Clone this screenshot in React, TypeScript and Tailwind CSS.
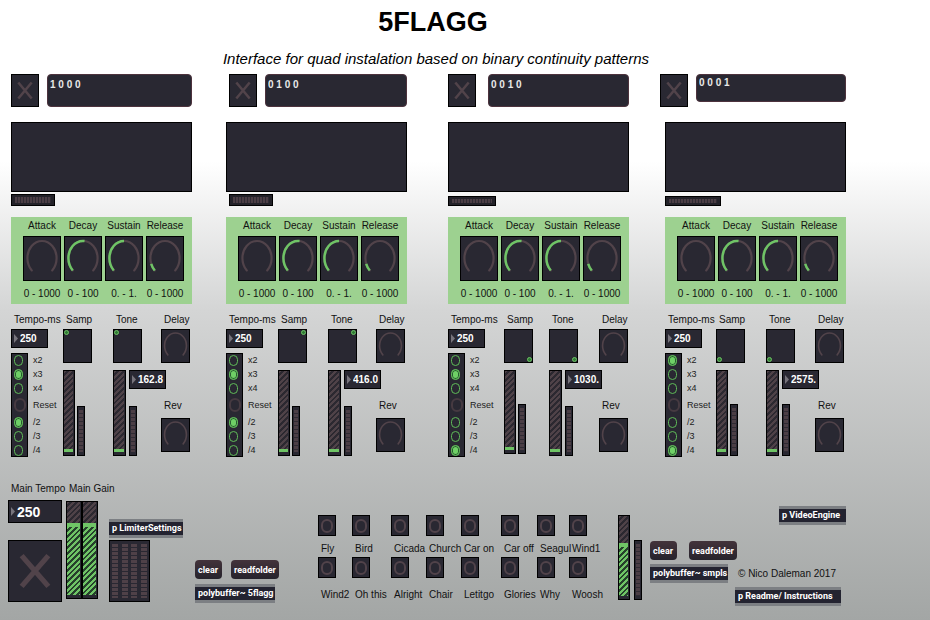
import React from "react";

type Channel = {
  id: string;
  pattern: string;
  cell: string;
  head: string;
  field: string;
  strip: string;
  columns: string;
  knob: string;
  faderHeight: string;
  meterHeight: string;
  active: string[];
  frequency: string;
};

const channels: Channel[] = [
  {
    id: "ch1",
    pattern: "1 0 0 0",
    cell: "pr-[34px]",
    head: "gap-2",
    field: "h-[33px]",
    strip: "h-3 w-11",
    columns: "grid-cols-[52px_50px_48px_29px]",
    knob: "top-0 left-0",
    faderHeight: "h-[86px]",
    meterHeight: "h-[50px]",
    active: ["x3", "/2"],
    frequency: "162.8",
  },
  {
    id: "ch2",
    pattern: "0 1 0 0",
    cell: "pr-[41px]",
    head: "ml-[3px] gap-2",
    field: "h-[33px]",
    strip: "ml-[3px] h-3 w-11",
    columns: "grid-cols-[52px_50px_48px_29px]",
    knob: "top-0 right-0",
    faderHeight: "h-[86px]",
    meterHeight: "h-[50px]",
    active: ["x3", "/2"],
    frequency: "416.0",
  },
  {
    id: "ch3",
    pattern: "0 0 1 0",
    cell: "pr-[36px]",
    head: "gap-3",
    field: "h-[33px]",
    strip: "mt-0.5 h-2.5 w-12",
    columns: "grid-cols-[56px_45px_50px_29px]",
    knob: "right-0 bottom-0",
    faderHeight: "h-[84px]",
    meterHeight: "h-[50px]",
    active: ["x3", "/4"],
    frequency: "1030.",
  },
  {
    id: "ch4",
    pattern: "0 0 0 1",
    cell: "pr-[84px]",
    head: "-ml-[5px] gap-2",
    field: "h-7",
    strip: "mt-0.5 h-2.5 w-14",
    columns: "grid-cols-[51px_50px_49px_29px]",
    knob: "bottom-0 left-0",
    faderHeight: "h-[86px]",
    meterHeight: "h-[52px]",
    active: ["x2", "/4"],
    frequency: "2575.",
  },
];

const envelope = [
  { name: "Attack", range: "0 - 1000", value: 0 },
  { name: "Decay", range: "0 - 100", value: 52 },
  { name: "Sustain", range: "0. - 1.", value: 50 },
  { name: "Release", range: "0 - 1000", value: 10 },
];

const divisions = ["x2", "x3", "x4", "Reset", "/2", "/3", "/4"];

const sounds = [
  ["Fly", "Bird", "Cicada", "Church", "Car on", "Car off", "Seagul", "Wind1"],
  ["Wind2", "Oh this", "Alright", "Chair", "Letitgo", "Glories", "Why", "Woosh"],
];

function Toggle({ label, size }: { label: string; size: string }) {
  return (
    <label className={`relative block shrink-0 border border-black bg-[#292832] ${size}`}>
      <input type="checkbox" aria-label={label} className="absolute inset-0 opacity-0" />
      <svg viewBox="0 0 28 33" preserveAspectRatio="none" className="block h-full w-full">
        <path d="M6.8 8 21.2 25M21.2 8 6.8 25" stroke="#51434a" strokeWidth="2.8" />
      </svg>
    </label>
  );
}

function Dial({ label, value = 0, size }: { label: string; value?: number; size: string }) {
  const arc = "M8.2 35A15.4 18 0 1 1 29.8 35";
  return (
    <div className={`relative border border-black bg-[#292832] ${size}`}>
      <svg viewBox="0 0 38 45" preserveAspectRatio="none" className="block h-full w-full" fill="none">
        <path d={arc} stroke="#51434a" strokeWidth="2.3" strokeLinecap="round" />
        {value > 0 && (
          <path d={arc} pathLength={100} strokeDasharray={`${value} 200`} stroke="#6fc466" strokeWidth="2.6" />
        )}
      </svg>
      <input type="range" aria-label={label} defaultValue={value} className="absolute inset-0 h-full w-full opacity-0" />
    </div>
  );
}

function NumberBox({ label, value, large = false }: { label: string; value: string; large?: boolean }) {
  return (
    <label
      className={`flex shrink-0 items-center border border-black bg-[#292832] pl-0.5 ${
        large ? "h-[23px] w-[54px]" : "h-[19px] w-[37px]"
      }`}
    >
      <svg viewBox="0 0 4 9" className="h-[9px] w-1 shrink-0">
        <path d="M0 0 4 4.5 0 9z" fill="#77747c" />
      </svg>
      <input
        aria-label={label}
        defaultValue={value}
        className={`w-full min-w-0 bg-transparent pl-0.5 font-bold text-white outline-none ${
          large ? "text-[14px] leading-5" : "text-[10px] leading-4"
        }`}
      />
    </label>
  );
}

function Fader({ label, level, size, full = false }: { label: string; level: number; size: string; full?: boolean }) {
  return (
    <div className={`relative flex shrink-0 flex-col justify-end border border-black bg-[#292832] pr-px pb-[3px] ${size}`}>
      <div className="flex-1 bg-[repeating-linear-gradient(135deg,#4f4248_0px,#4f4248_2px,#2b2830_2px,#2b2830_4px)]" />
      <div
        className={
          full
            ? "border-t-4 border-[#6fc466] bg-[repeating-linear-gradient(135deg,#6fc466_0px,#6fc466_2px,#26402c_2px,#26402c_4px)]"
            : "bg-[#6fc466]"
        }
        style={{ height: `${level}%` }}
      />
      <input type="range" aria-label={label} defaultValue={level} className="absolute inset-0 h-full w-full opacity-0" />
    </div>
  );
}

function Meter({ size }: { size: string }) {
  return (
    <div className={`shrink-0 border border-black bg-[#292832] px-px py-[3px] ${size}`}>
      <div className="h-full bg-[repeating-linear-gradient(180deg,#4b3e45_0px,#4b3e45_3px,#2f2b33_3px,#2f2b33_4px)]" />
    </div>
  );
}

function Pad({ label, knob }: { label: string; knob: string }) {
  return (
    <button aria-label={label} className="relative block h-[34px] w-[29px] border border-black bg-[#292832]">
      <span className={`absolute h-[5px] w-[5px] rounded-full border border-[#6fc466] bg-[#2f7a35] ${knob}`} />
    </button>
  );
}

function Patch({ children, size }: { children: React.ReactNode; size: string }) {
  return (
    <button
      className={`block h-[19px] border-y-[3px] border-[#7c7f83] bg-[#232330] pl-[3px] text-left font-['Roboto',sans-serif] text-[9px] leading-[13px] font-bold whitespace-nowrap text-white ${size}`}
    >
      {children}
    </button>
  );
}

function Message({ children, size }: { children: React.ReactNode; size: string }) {
  return (
    <button
      className={`h-[19px] shrink-0 rounded-[4px] bg-linear-to-b from-[#43333b] to-[#26232c] pl-[3px] text-left font-['Roboto',sans-serif] text-[9px] leading-[14px] font-bold whitespace-nowrap text-white ${size}`}
    >
      {children}
    </button>
  );
}

function Divider({ channel }: { channel: Channel }) {
  const rows = "grid h-[104px] grid-rows-[14px_14px_14px_20px_14px_14px_14px] items-center";
  return (
    <div className="mt-[5px] flex gap-[5px]">
      <div className={`w-[17px] bg-[#292832] pl-[3px] shadow-[inset_0_0_0_1px_#000] ${rows}`}>
        {divisions.map((name) =>
          name === "Reset" ? (
            <button
              key={name}
              id={`${channel.id}-Reset`}
              aria-label="Reset"
              className="h-[14px] w-3 rounded-full border-2 border-[#463a41]"
            />
          ) : (
            <input
              key={name}
              id={`${channel.id}-${name}`}
              type="radio"
              name={`${channel.id}-${name[0]}`}
              defaultChecked={channel.active.includes(name)}
              className="h-[11px] w-[9px] appearance-none rounded-full border border-[#5fbb58] checked:bg-[#6fd066] checked:shadow-[inset_0_0_0_1px_#285c30]"
            />
          ),
        )}
      </div>
      <div className={`text-[9px] leading-3 text-[#1c1c1c] ${rows}`}>
        {divisions.map((name) => (
          <label key={name} htmlFor={`${channel.id}-${name}`}>
            {name}
          </label>
        ))}
      </div>
    </div>
  );
}

function Caption({ children }: { children: React.ReactNode }) {
  return <div className="mb-[3px] h-[14px] pl-[3px] text-[10px] leading-[16px] whitespace-nowrap">{children}</div>;
}

function ChannelStrip({ channel }: { channel: Channel }) {
  return (
    <section className={`min-w-0 ${channel.cell}`}>
      <div className={`flex h-[33px] items-start ${channel.head}`}>
        <Toggle label="Run pattern" size="h-[33px] w-7" />
        <input
          aria-label="Pattern"
          defaultValue={channel.pattern}
          className={`min-w-0 flex-1 rounded-[4px] border border-[#4d333d] bg-[#292832] pb-3 pl-0.5 text-[10px] leading-4 font-bold text-[#e8e8e8] outline-none ${channel.field}`}
        />
      </div>

      <div className="mt-[15px] h-[70px] border border-black bg-[#292832]" />
      <div className="h-[25px] pt-0.5">
        <div className={`border border-black bg-[#232229] px-[3px] py-0.5 ${channel.strip}`}>
          <div className="h-full bg-[repeating-linear-gradient(90deg,#4b3e45_0px,#4b3e45_2px,#2f2b33_2px,#2f2b33_3px)]" />
        </div>
      </div>

      <div className="grid h-[87px] grid-cols-[38px_38px_38px_38px] content-start justify-center gap-x-[3px] bg-[#9dd190] pt-[3px] pr-px pl-[5px] text-[10px]">
        {envelope.map((stage) => (
          <div key={stage.name} className="flex flex-col items-center whitespace-nowrap">
            <div className="h-4 leading-3">{stage.name}</div>
            <Dial label={stage.name} value={stage.value} size="h-[45px] w-[38px]" />
            <div className="mt-[5px] leading-4">{stage.range}</div>
          </div>
        ))}
      </div>

      <div className={`mt-2 grid ${channel.columns}`}>
        <div>
          <Caption>Tempo-ms</Caption>
          <NumberBox label="Tempo-ms" value="250" />
          <Divider channel={channel} />
        </div>
        <div>
          <Caption>Samp</Caption>
          <Pad label="Samp" knob={channel.knob} />
          <div className="mt-[7px] flex items-end gap-0.5">
            <Fader label="Sample gain" level={4} size={`w-3 ${channel.faderHeight}`} />
            <Meter size={`w-2 ${channel.meterHeight}`} />
          </div>
        </div>
        <div>
          <Caption>Tone</Caption>
          <Pad label="Tone" knob={channel.knob} />
          <div className="mt-[7px] flex h-[86px] gap-[3px]">
            <Fader label="Tone gain" level={4} size="h-[86px] w-[13px]" />
            <div className="flex flex-col justify-between">
              <NumberBox label="Frequency" value={channel.frequency} />
              <Meter size={`w-2 ${channel.meterHeight}`} />
            </div>
          </div>
        </div>
        <div>
          <Caption>Delay</Caption>
          <Dial label="Delay" size="h-[34px] w-[29px]" />
          <div className="h-[35px]" />
          <Caption>Rev</Caption>
          <div className="h-[3px]" />
          <Dial label="Rev" size="h-[34px] w-[29px]" />
        </div>
      </div>
    </section>
  );
}

function LimiterMeter() {
  return (
    <div className="mt-0.5 flex h-[62px] w-[41px] justify-between border border-black bg-[#292832] px-0.5 py-[3px]">
      {[0, 1, 2, 3].map((i) => (
        <div
          key={i}
          className="w-[6px] bg-[repeating-linear-gradient(180deg,#4f4148_0px,#4f4148_3px,#292832_3px,#292832_4px)]"
        />
      ))}
    </div>
  );
}

export default function App() {
  return (
    <main className="min-h-screen bg-linear-to-b from-white from-26% via-[#d4d5d5] via-50% to-[#a3a6a5] pt-1.5 font-['Liberation_Sans',Arial,sans-serif] text-[#111]">
      <header className="pr-16 text-center text-black">
        <h1 className="text-[27px] leading-8 font-bold">5FLAGG</h1>
        <p className="mt-2.5 pl-1.5 text-[15px] leading-[22px] italic">
          Interface for quad instalation based on binary continuity patterns
        </p>
      </header>

      <div className="mt-1 grid grid-cols-[215fr_222fr_217fr_265fr] pl-[11px]">
        {channels.map((channel) => (
          <ChannelStrip key={channel.id} channel={channel} />
        ))}
      </div>

      <div className="mt-6 grid grid-cols-[187fr_123fr_300fr_312fr] pl-2 text-[10px] leading-[14px]">
        <div className="flex">
          <div className="w-[58px]">
            <Caption>Main Tempo</Caption>
            <div className="h-0.5" />
            <NumberBox label="Main Tempo" value="250" large />
            <div className="h-[17px]" />
            <Toggle label="Main run" size="h-[62px] w-[54px]" />
          </div>
          <div className="w-[43px]">
            <Caption>Main Gain</Caption>
            <div className="mt-1.5 flex">
              <Fader label="Main gain left" level={77} size="h-[98px] w-4" full />
              <Fader label="Main gain right" level={77} size="h-[98px] w-4" full />
            </div>
          </div>
          <div className="pt-[38px]">
            <Patch size="w-[74px]">p LimiterSettings</Patch>
            <LimiterMeter />
          </div>
        </div>

        <div className="pt-[79px]">
          <div className="flex gap-[9px]">
            <Message size="w-[27px]">clear</Message>
            <Message size="w-12">readfolder</Message>
          </div>
          <Patch size="mt-[5px] w-20">polybuffer~ 5flagg</Patch>
        </div>

        <div className="pt-[34px]">
          {sounds.map((row, r) => (
            <div key={r} className="mb-[1px] grid grid-cols-[34fr_39fr_35fr_35fr_40fr_36fr_32fr_49fr]">
              {row.map((name) => (
                <button key={name} className="flex min-w-0 flex-col items-start whitespace-nowrap">
                  <span className="flex h-[21px] w-[18px] items-center justify-center border border-black bg-[#292832]">
                    <span className="h-[14px] w-3 rounded-full border-2 border-[#51434a]" />
                  </span>
                  <span className={`pl-[3px] ${r === 0 ? "mt-1.5" : "mt-2.5"}`}>{name}</span>
                </button>
              ))}
            </div>
          ))}
        </div>

        <div className="flex items-start pt-[25px]">
          <div className="flex items-end gap-1 pt-[9px]">
            <Fader label="Sample gain" level={66} size="h-[85px] w-3" full />
            <Meter size="h-[60px] w-2" />
          </div>
          <div className="ml-2 grid grid-cols-[85px_auto]">
            <div className="pt-[35px]">
              <div className="flex gap-3">
                <Message size="w-[27px]">clear</Message>
                <Message size="w-12">readfolder</Message>
              </div>
              <Patch size="mt-1 w-[78px]">polybuffer~ smpls</Patch>
            </div>
            <div>
              <Patch size="ml-11 w-[67px]">p VideoEngine</Patch>
              <p className="mt-[42px] pl-[3px]">© Nico Daleman 2017</p>
              <Patch size="mt-1.5 w-[106px]">p Readme/ Instructions</Patch>
            </div>
          </div>
        </div>
      </div>
    </main>
  );
}
